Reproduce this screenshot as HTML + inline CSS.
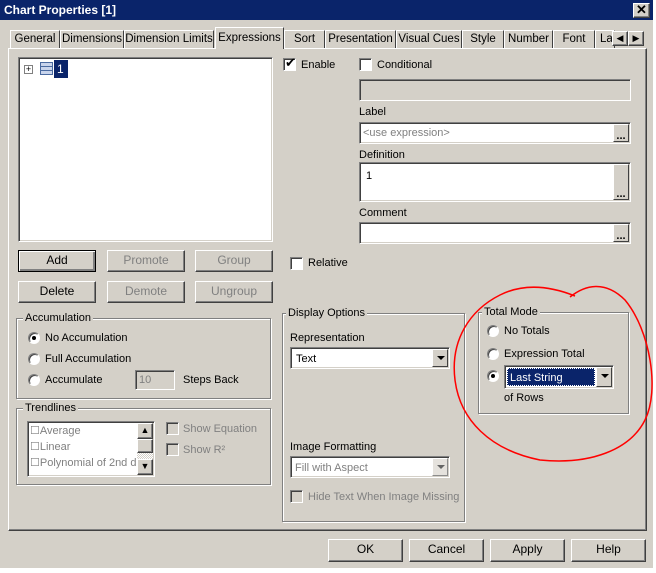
<!DOCTYPE html>
<html><head><meta charset="utf-8"><style>
*{box-sizing:border-box}
body{margin:0;width:656px;height:573px;overflow:hidden;background:#d4d0c8;font-family:"Liberation Sans",Tahoma,sans-serif;font-size:11px;color:#000;position:relative}
.a{position:absolute}
.t{position:absolute;white-space:nowrap;line-height:14px}
.dis{color:#808080}
.sunk{position:absolute;background:#fff;border:1px solid;border-color:#808080 #fff #fff #808080;box-shadow:inset 1px 1px 0 #404040,inset -1px -1px 0 #d4d0c8}
.btn{position:absolute;background:#d4d0c8;border:1px solid;border-color:#fff #404040 #404040 #fff;box-shadow:inset -1px -1px 0 #808080;text-align:center;line-height:19px;font-size:12px}
.grp{position:absolute;border:1px solid #808080;box-shadow:1px 1px 0 #fff,inset 1px 1px 0 #fff}
.gl{position:absolute;top:-8px;left:6px;background:#d4d0c8;padding:0 2px;line-height:14px}
.cb{position:absolute;width:13px;height:13px;background:#fff;border:1px solid;border-color:#808080 #fff #fff #808080;box-shadow:inset 1px 1px 0 #404040}
.rb{position:absolute;width:12px;height:12px;border-radius:50%;background:#fff;border:1px solid;border-color:#808080 #fff #fff #808080;box-shadow:inset 1px 1px 0 #404040}
.dot{position:absolute;left:3px;top:3px;width:4px;height:4px;border-radius:50%;background:#000}
.tab{position:absolute;top:30px;height:18px;border:1px solid;border-bottom:none;border-color:#fff #404040 #404040 #fff;line-height:17px;text-align:center;background:#d4d0c8;overflow:hidden;white-space:nowrap;font-size:11.5px}
.dd{position:absolute;top:1px;right:1px;bottom:1px;width:16px;background:#d4d0c8;border:1px solid;border-color:#fff #404040 #404040 #fff}
.dd:after{content:"";position:absolute;left:4px;top:6px;border:4px solid transparent;border-top:4px solid #000;border-bottom:none}
.eb{position:absolute;top:1px;right:1px;bottom:1px;width:16px;background:#d4d0c8;border:1px solid;border-color:#fff #404040 #404040 #fff;font-weight:bold;font-size:11px;line-height:22px;text-align:center}
</style></head><body>
<div class="a" style="left:0;top:0;width:653px;height:20px;background:#0a246a"></div>
<div class="t" style="left:4px;top:3px;color:#fff;font-weight:bold;font-size:12px">Chart Properties [1]</div>
<div class="btn" style="left:633px;top:3px;width:17px;height:15px;line-height:12px;font-weight:bold;font-size:13px">✕</div>
<div class="a" style="left:653px;top:0;width:3px;height:573px;background:#fff"></div>
<div class="a" style="left:0;top:568px;width:656px;height:5px;background:#fff"></div>
<div class="tab" style="left:10px;width:50px">General</div>
<div class="tab" style="left:60px;width:64px">Dimensions</div>
<div class="tab" style="left:124px;width:90px">Dimension Limits</div>
<div class="tab" style="left:284px;width:41px">Sort</div>
<div class="tab" style="left:325px;width:71px">Presentation</div>
<div class="tab" style="left:396px;width:66px">Visual Cues</div>
<div class="tab" style="left:462px;width:42px">Style</div>
<div class="tab" style="left:504px;width:49px">Number</div>
<div class="tab" style="left:553px;width:42px">Font</div>
<div class="tab" style="left:595px;width:20px;text-align:left;padding-left:4px">La</div>
<div class="btn" style="left:612px;top:31px;width:16px;height:15px;line-height:13px;font-size:9px">◀</div>
<div class="btn" style="left:628px;top:31px;width:16px;height:15px;line-height:13px;font-size:9px">▶</div>
<div class="a" style="left:8px;top:48px;width:639px;height:483px;border:1px solid;border-color:#fff #404040 #404040 #fff;box-shadow:inset -1px -1px 0 #808080"></div>
<div class="tab" style="left:215px;top:27px;width:69px;height:22px;line-height:20px;z-index:2">Expressions</div>
<div class="sunk" style="left:18px;top:57px;width:255px;height:185px"></div>
<div class="a" style="left:24px;top:65px;width:9px;height:9px;border:1px solid #808080;background:#fff;font-size:9px;line-height:7px;text-align:center">+</div>
<div class="a" style="left:40px;top:62px;width:13px;height:13px;border:1px solid #4a6aa0;background:repeating-linear-gradient(#c8d4ec 0 3px,#4a6aa0 3px 4px)"></div>
<div class="t" style="left:54px;top:60px;width:14px;height:18px;background:#0a246a;color:#fff;padding:2px 3px;font-size:12px">1</div>
<div class="cb" style="left:283px;top:58px"></div><div class="t" style="left:285px;top:56px;font-size:13px">✔</div>
<div class="t" style="left:301px;top:58px">Enable</div>
<div class="cb" style="left:359px;top:58px"></div><div class="t" style="left:377px;top:58px">Conditional</div>
<div class="sunk" style="left:359px;top:79px;width:272px;height:22px;background:#d4d0c8"></div>
<div class="t" style="left:359px;top:105px">Label</div>
<div class="sunk" style="left:359px;top:122px;width:272px;height:22px"><div class="t dis" style="left:3px;top:3px">&lt;use expression&gt;</div><div class="eb">...</div></div>
<div class="t" style="left:359px;top:148px">Definition</div>
<div class="sunk" style="left:359px;top:162px;width:272px;height:40px"><div class="t" style="left:6px;top:6px">1</div><div class="eb" style="line-height:58px">...</div></div>
<div class="t" style="left:359px;top:206px">Comment</div>
<div class="sunk" style="left:359px;top:222px;width:272px;height:22px"><div class="eb">...</div></div>
<div class="btn" style="left:18px;top:250px;width:78px;height:22px;border-color:#000;box-shadow:inset 1px 1px 0 #fff,inset -2px -2px 0 #808080">Add</div>
<div class="btn dis" style="left:107px;top:250px;width:78px;height:22px">Promote</div>
<div class="btn dis" style="left:195px;top:250px;width:78px;height:22px">Group</div>
<div class="btn" style="left:18px;top:281px;width:78px;height:22px">Delete</div>
<div class="btn dis" style="left:107px;top:281px;width:78px;height:22px">Demote</div>
<div class="btn dis" style="left:195px;top:281px;width:78px;height:22px">Ungroup</div>
<div class="cb" style="left:290px;top:257px"></div><div class="t" style="left:308px;top:256px">Relative</div>
<div class="grp" style="left:16px;top:318px;width:255px;height:81px"><div class="gl">Accumulation</div></div>
<div class="rb" style="left:28px;top:332px"><div class="dot"></div></div><div class="t" style="left:45px;top:331px">No Accumulation</div>
<div class="rb" style="left:28px;top:353px"></div><div class="t" style="left:45px;top:352px">Full Accumulation</div>
<div class="rb" style="left:28px;top:374px"></div><div class="t" style="left:45px;top:373px">Accumulate</div>
<div class="sunk" style="left:135px;top:370px;width:40px;height:20px;background:#d4d0c8"><div class="t dis" style="left:3px;top:2px">10</div></div>
<div class="t" style="left:183px;top:373px">Steps Back</div>
<div class="grp" style="left:16px;top:408px;width:255px;height:77px"><div class="gl">Trendlines</div></div>
<div class="sunk" style="left:27px;top:421px;width:128px;height:56px;overflow:hidden">
<div class="t dis" style="left:2px;top:2px">☐Average</div><div class="t dis" style="left:2px;top:18px">☐Linear</div><div class="t dis" style="left:2px;top:34px">☐Polynomial of 2nd d</div>
<div class="a" style="right:1px;top:1px;width:16px;height:52px;background:repeating-conic-gradient(#fff 0 25%,#d4d0c8 0 50%) 0 0/2px 2px"></div>
<div class="btn" style="right:1px;top:1px;width:16px;height:16px;line-height:12px;font-size:9px">▲</div>
<div class="btn" style="right:1px;top:17px;width:16px;height:14px"></div>
<div class="btn" style="right:1px;top:37px;width:16px;height:16px;line-height:12px;font-size:9px">▼</div></div>
<div class="cb" style="left:166px;top:422px;background:#d4d0c8"></div><div class="t dis" style="left:183px;top:422px">Show Equation</div>
<div class="cb" style="left:166px;top:443px;background:#d4d0c8"></div><div class="t dis" style="left:183px;top:443px">Show R²</div>
<div class="grp" style="left:282px;top:313px;width:183px;height:209px"><div class="gl" style="left:3px">Display Options</div></div>
<div class="t" style="left:290px;top:331px">Representation</div>
<div class="sunk" style="left:290px;top:347px;width:160px;height:22px"><div class="t" style="left:5px;top:4px">Text</div><div class="dd"></div></div>
<div class="t" style="left:290px;top:440px">Image Formatting</div>
<div class="sunk" style="left:290px;top:456px;width:160px;height:22px"><div class="t dis" style="left:4px;top:4px">Fill with Aspect</div><div class="dd" style="opacity:.6"></div></div>
<div class="cb" style="left:290px;top:490px;background:#d4d0c8"></div><div class="t dis" style="left:308px;top:490px">Hide Text When Image Missing</div>
<div class="grp" style="left:478px;top:312px;width:151px;height:102px"><div class="gl" style="left:3px">Total Mode</div></div>
<div class="rb" style="left:487px;top:325px"></div><div class="t" style="left:504px;top:324px">No Totals</div>
<div class="rb" style="left:487px;top:348px"></div><div class="t" style="left:504px;top:347px">Expression Total</div>
<div class="rb" style="left:487px;top:370px"><div class="dot"></div></div>
<div class="sunk" style="left:504px;top:365px;width:110px;height:24px"><div class="a" style="left:2px;top:2px;width:88px;height:18px;background:#0a246a;outline:1px dotted #fff;outline-offset:-1px"></div><div class="t" style="left:5px;top:5px;color:#fff">Last String</div><div class="dd"></div></div>
<div class="t" style="left:504px;top:391px">of Rows</div>
<svg class="a" style="left:0;top:0" width="656" height="573"><path d="M575 296 C560 290 530 280 500 295 C470 310 450 340 455 380 C460 420 490 450 540 460 C590 465 630 450 645 420 C660 390 650 330 625 300 C605 280 585 285 570 297" fill="none" stroke="#f00" stroke-width="1.5"/></svg>
<div class="btn" style="left:328px;top:539px;width:75px;height:23px">OK</div>
<div class="btn" style="left:409px;top:539px;width:75px;height:23px">Cancel</div>
<div class="btn" style="left:490px;top:539px;width:75px;height:23px">Apply</div>
<div class="btn" style="left:571px;top:539px;width:75px;height:23px">Help</div>
</body></html>
